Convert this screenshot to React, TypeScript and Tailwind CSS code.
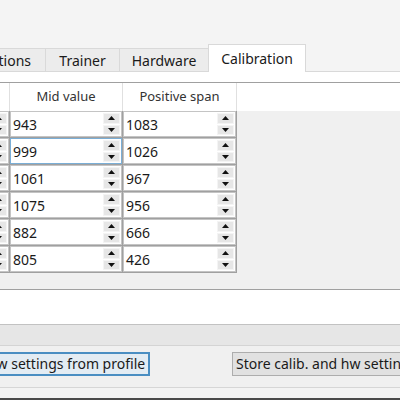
import React from 'react';

const rows = [
  ['943', '1083'],
  ['999', '1026'],
  ['1061', '967'],
  ['1075', '956'],
  ['882', '666'],
  ['805', '426'],
];

function Arrow({ down }: { down?: boolean }) {
  return (
    <svg width="7" height="4" viewBox="0 0 7 4" className="block">
      {down ? <polygon points="0,0 7,0 3.5,4" fill="#111" /> : <polygon points="0,4 7,4 3.5,0" fill="#111" />}
    </svg>
  );
}

function SpinCell({ value, width, focused }: { value: string; width: string; focused?: boolean }) {
  return (
    <div className={`${width} h-[27px] shrink-0 border-r border-b border-[#a0a0a0] bg-white flex`}>
      <div className={`flex-1 flex border ${focused ? 'border-[#7aaed6]' : 'border-[#c4c4c4]'}`}>
        <span className="flex-1 pl-[2px] flex items-center text-[14px] text-[#1a1a1a]">{value}</span>
        <div className="w-[17px] mr-px my-px flex flex-col gap-px">
          <div className="flex-1 bg-[#e6e6e6] border border-[#f4f4f4] flex items-center justify-center">
            <Arrow />
          </div>
          <div className="flex-1 bg-[#e6e6e6] border border-[#f4f4f4] flex items-center justify-center">
            <Arrow down />
          </div>
        </div>
      </div>
    </div>
  );
}

export default function App() {
  return (
    <div className="w-[400px] h-[400px] overflow-hidden flex flex-col bg-[#f0f0f0] font-['Noto_Sans',sans-serif] text-[13px] text-[#1a1a1a]">
      <div className="h-[45px] shrink-0 bg-[#f4f4f4]" />

      {/* tab bar */}
      <div className="h-[26px] shrink-0 flex items-end bg-[#f4f4f4] -ml-[36px] relative z-10">
        <div className="h-[23px] px-[14px] flex items-center bg-[#ececec] border border-b-0 border-[#d9d9d9] text-[14px]">Options</div>
        <div className="h-[23px] w-[75px] -ml-px flex items-center justify-center bg-[#ececec] border border-b-0 border-[#d9d9d9] text-[14px]">Trainer</div>
        <div className="h-[23px] w-[90px] -ml-px flex items-center justify-center bg-[#ececec] border border-b-0 border-[#d9d9d9] text-[14px]">Hardware</div>
        <div className="h-[28px] w-[98px] -ml-px -mb-px flex items-center justify-center bg-white border border-b-0 border-[#d9d9d9] text-[14px]">Calibration</div>
      </div>

      {/* tab pane */}
      <div className="shrink-0 bg-white border-t border-b border-t-[#d9d9d9] border-b-[#c2c2c2] pt-[10px] pb-[34px]">
        <div className="border-t border-b border-[#a0a0a0] bg-[#f0f0f0] overflow-hidden">
          <div className="-ml-[100px] flex bg-white h-[28px]">
            <div className="w-[110px] shrink-0 border-r border-[#e0e0e0]" />
            <div className="w-[113px] shrink-0 border-r border-[#e0e0e0] flex items-center justify-center text-[#333]">Mid value</div>
            <div className="w-[114px] shrink-0 border-r border-[#e0e0e0] flex items-center justify-center text-[#333]">Positive span</div>
          </div>
          <div className="-ml-[100px] flex flex-col pb-[16px]">
            {rows.map(([mid, span], i) => (
              <div key={i} className="flex">
                <SpinCell value="" width="w-[110px]" />
                <SpinCell value={mid} width="w-[113px]" focused={i === 1} />
                <SpinCell value={span} width="w-[114px]" />
              </div>
            ))}
          </div>
        </div>
      </div>

      <div className="h-[21px] shrink-0 bg-[#e6e6e6] border-b border-[#d4d4d4]" />

      <div className="h-[42px] shrink-0 flex items-start pt-[6px] justify-between bg-[#f0f0f0] border-b border-[#d6d6d6]">
        <button className="h-[24px] -ml-[40px] pl-[10px] pr-[3px] bg-[#e3ecf3] border-2 border-[#4a8ec2] text-[14px] leading-none">
          Show settings from profile
        </button>
        <button className="h-[24px] w-[178px] -mr-[10px] pl-[3px] text-left bg-[#e1e1e1] border border-[#adadad] text-[14px] leading-none whitespace-nowrap overflow-hidden">
          Store calib. and hw settings
        </button>
      </div>

      <div className="flex-1 bg-[#f3f3f3] flex flex-col justify-end">
        <div className="h-[2px] bg-[#4a4a4a]" />
      </div>
    </div>
  );
}
